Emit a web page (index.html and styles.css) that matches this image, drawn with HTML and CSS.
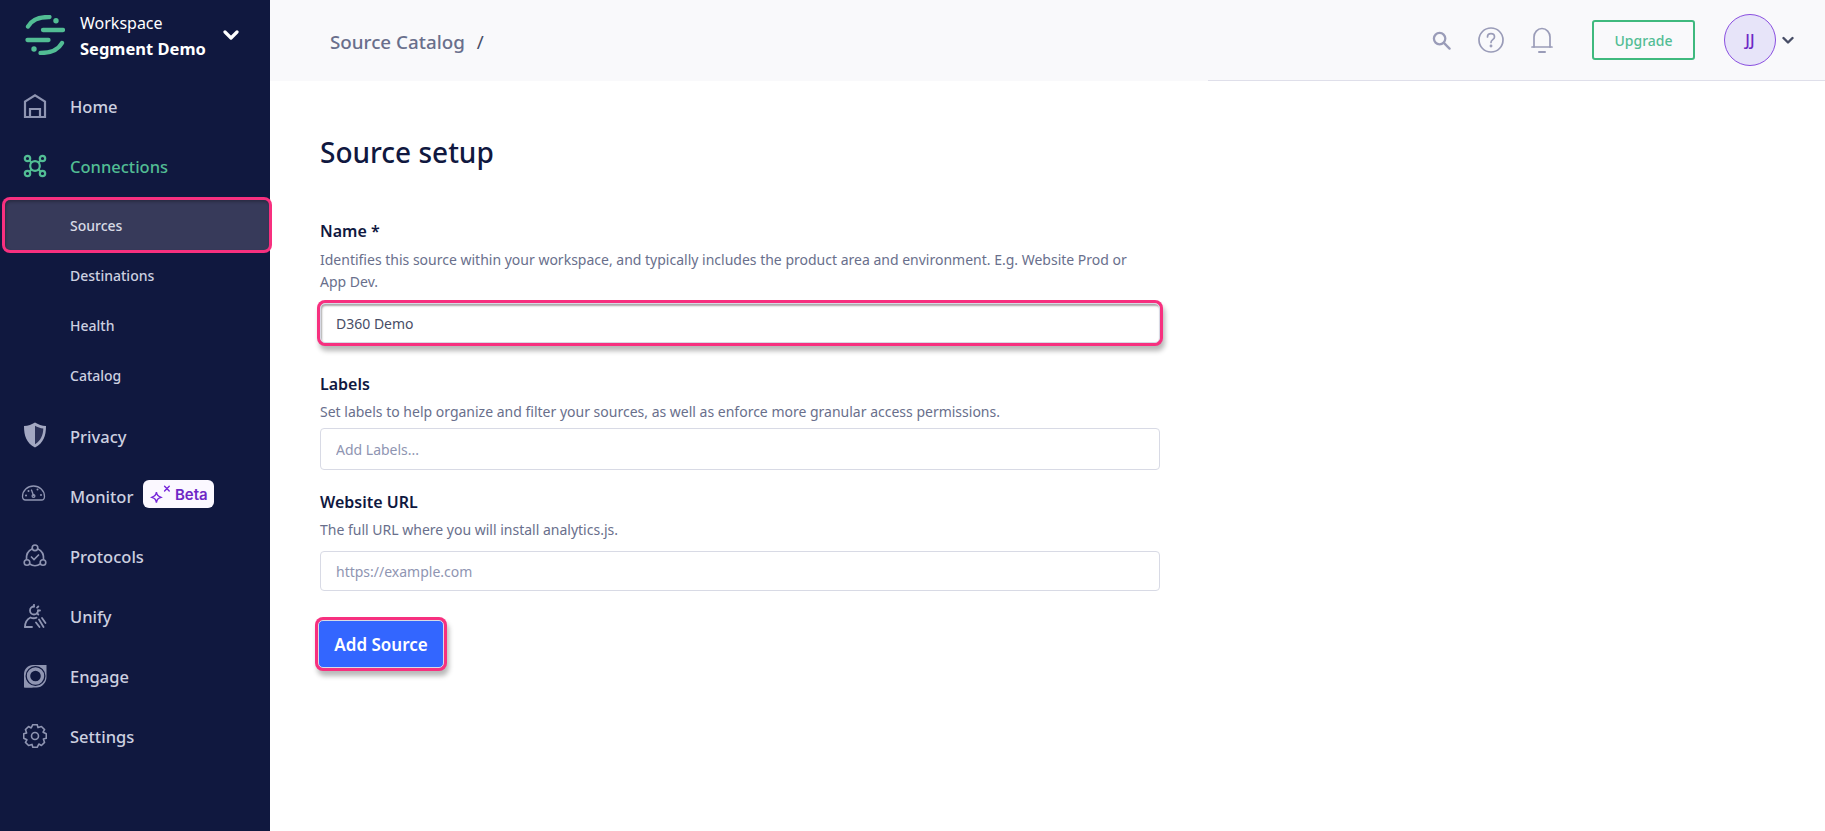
FILE: index.html
```html
<!DOCTYPE html>
<html lang="en">
<head>
<meta charset="utf-8">
<title>Source setup</title>
<link rel="stylesheet" href="styles.css">
</head>
<body>
<div class="app">
  <aside class="sidebar">
    <div class="workspace">
      <svg class="logo" viewBox="0 0 40 40" fill="none" stroke="#52bd94" stroke-width="4.3" stroke-linecap="round">
        <path d="M3 11.500C6.500 5 13 1.800 24.500 2"/>
        <circle cx="31" cy="5.800" r="2.700" fill="#52bd94" stroke="none"/>
        <path d="M18 15H38"/>
        <path d="M2.500 25H23.500"/>
        <circle cx="9" cy="34" r="2.700" fill="#52bd94" stroke="none"/>
        <path d="M37 28C33.500 34.500 27 38 15.500 38"/>
      </svg>
      <div class="workspace-text">
        <div class="workspace-label">Workspace</div>
        <div class="workspace-name">Segment Demo</div>
      </div>
      <svg class="workspace-chevron" viewBox="0 0 16 12" fill="none" stroke="#fff" stroke-width="3.200" stroke-linecap="round" stroke-linejoin="round"><path d="M2 3l6 6 6-6"/></svg>
    </div>
    <nav class="nav">
      <a class="nav-item">
        <svg class="nav-icon" viewBox="0 0 24 24" fill="none" stroke="currentColor" stroke-width="2.200"><path d="M2 23V7.500L12 1.300l10 6.200V23z"/><path d="M7 23V15h10v8"/></svg>
        <span>Home</span>
      </a>
      <a class="nav-item active">
        <svg class="nav-icon" viewBox="0 0 24 24" fill="none" stroke="currentColor" stroke-width="2.200"><circle cx="4.500" cy="4.500" r="2.700"/><circle cx="19.500" cy="4.500" r="2.700"/><circle cx="4.500" cy="19.500" r="2.700"/><circle cx="19.500" cy="19.500" r="2.700"/><circle cx="12" cy="12" r="4.800"/><path d="M6.500 6.500l2.200 2.200M17.500 6.500l-2.200 2.200M6.500 17.500l2.200-2.200M17.500 17.500l-2.200-2.200"/></svg>
        <span>Connections</span>
      </a>
      <a class="sub-item current">Sources</a>
      <a class="sub-item">Destinations</a>
      <a class="sub-item">Health</a>
      <a class="sub-item last">Catalog</a>
      <a class="nav-item">
        <svg class="nav-icon shield" viewBox="0 0 24 26"><path d="M12 .5C9 2.500 5 3.800 1 4c0 10 2.500 17 11 21.500C20.500 21 23 14 23 4c-4-.2-8-1.500-11-3.500z" fill="#a3a8c2"/><path d="M12 3.800v18.500c6.200-3.800 8-9.200 8.300-15.700C17.300 6.200 14.500 5.300 12 3.800z" fill="#2b3157"/></svg>
        <span>Privacy</span>
      </a>
      <a class="nav-item">
        <svg class="nav-icon wide" viewBox="0 0 24 16" fill="none" stroke="currentColor" stroke-width="1.300" stroke-linecap="round"><path d="M4 15C2 15 1 13.500 1 11.500 1 5.500 6 1 12 1s11 4.500 11 10.500c0 2-1 3.500-3 3.500z"/><path d="M12 10.500L10 5"/><circle cx="12" cy="11" r="1.400"/><path d="M4.500 10.500h.01M7 6h.01M16 4.500h.01M19.500 10h.01" stroke-width="2"/></svg>
        <span>Monitor</span>
        <span class="beta">
          <svg class="beta-icon" viewBox="0 0 18 16" fill="none" stroke="#7626d9" stroke-width="1.200" stroke-linecap="round"><path d="M5.500 6c.5 2.500 1 3 4 4.500-3 1-3.500 1.500-4 4.500-.5-3-1-3.500-4-4.500 3-1.500 3.500-2 4-4.500z"/><path d="M12.500 1l4 4M16.500 1l-4 4"/></svg>
          Beta
        </span>
      </a>
      <a class="nav-item">
        <svg class="nav-icon" viewBox="0 0 24 24" fill="none" stroke="currentColor" stroke-width="1.600"><circle cx="12" cy="3.800" r="2.800"/><circle cx="4" cy="18.500" r="2.800"/><circle cx="20" cy="18.500" r="2.800"/><path d="M9.300 4.800C5.500 6.500 3 10.500 3.500 15.700M14.700 4.800C18.500 6.500 21 10.500 20.500 15.700M6.800 20c3 2.200 7.400 2.200 10.400 0"/><path d="M8 12.500l3 3 5-5"/></svg>
        <span>Protocols</span>
      </a>
      <a class="nav-item">
        <svg class="nav-icon" viewBox="0 0 24 24" fill="none" stroke="currentColor" stroke-width="1.800" stroke-linecap="round"><path d="M15 6.500A4 4 0 1 1 11 2.500"/><path d="M11 .8v1.700M15.300 2.500l-1.200 1.200M17 6.500h-2M15.300 10.500l-1.200-1.200"/><path d="M2 23c0-4 1.500-7.500 5.500-9.500 2 1 4 1 6 .2"/><path d="M2 23h7"/><path d="M13 18.500l3.500 4.500M16 15.500l4.500 7.500M19 14l3.500 5"/></svg>
        <span>Unify</span>
      </a>
      <a class="nav-item">
        <svg class="nav-icon" viewBox="0 0 24 24"><path d="M1 23.500V10C1 5 5 1 10 1h13.500v12c0 5.500-4.500 10.500-10 10.500z" fill="currentColor"/><circle cx="12.500" cy="12" r="10" fill="#10183f"/><path d="M1 23.500h9C5 21 2.700 17 2.700 12.500V23z" fill="currentColor"/><circle cx="12.500" cy="12" r="7" fill="none" stroke="currentColor" stroke-width="3.400"/></svg>
        <span>Engage</span>
      </a>
      <a class="nav-item">
        <svg class="nav-icon" viewBox="0 0 24 24" fill="none" stroke="currentColor" stroke-width="1.600" stroke-linejoin="round"><circle cx="12" cy="12" r="3.500"/><path d="M9.800 .7H14.200L15 3.600 18.430 2.450 21.550 5.570 20.060 8.180 23.300 9.800V14.200L20.400 15 21.550 18.430 18.430 21.550 15.820 20.060 14.200 23.300H9.800L9 20.400 5.570 21.550 2.450 18.430 3.940 15.820 .7 14.200V9.800L3.600 9 2.450 5.570 5.570 2.450 8.180 3.940z"/></svg>
        <span>Settings</span>
      </a>
    </nav>
  </aside>
  <div class="main">
    <header class="topbar">
      <div class="crumbs"><span>Source Catalog</span><span class="slash">/</span></div>
      <div class="top-actions">
        <svg class="top-icon search" viewBox="0 0 20 20" fill="none" stroke="#9a9cb8" stroke-width="2.400" stroke-linecap="round"><circle cx="8" cy="8" r="6"/><path d="M12.500 12.500l6 6"/></svg>
        <svg class="top-icon help" viewBox="0 0 26 26" fill="none" stroke="#9a9cb8" stroke-width="1.700" stroke-linecap="round"><circle cx="13" cy="13" r="12"/><path d="M9.500 10c0-2 1.500-3.300 3.500-3.300s3.500 1.300 3.500 3.200c0 2.700-3.500 2.800-3.500 5.500"/><circle cx="13" cy="19" r=".6"/></svg>
        <svg class="top-icon bell" viewBox="0 0 22 26" fill="none" stroke="#9a9cb8" stroke-width="1.700" stroke-linecap="round"><path d="M1 20h20"/><path d="M3 20V10c0-4.500 3.500-8.500 8-8.500s8 4 8 8.500v10"/><path d="M8 25h6" stroke-width="2"/></svg>
        <button class="upgrade">Upgrade</button>
        <div class="avatar">JJ</div>
        <svg class="avatar-chevron" viewBox="0 0 12 9" fill="none" stroke="#474d66" stroke-width="2.400" stroke-linecap="round" stroke-linejoin="round"><path d="M1.500 2l4.500 4.500L10.500 2"/></svg>
      </div>
    </header>
    <main class="content">
      <h1 class="title">Source setup</h1>
      <form class="form">
        <div class="field field-name">
          <label class="label">Name *</label>
          <p class="hint">Identifies this source within your workspace, and typically includes the product area and environment. E.g. Website Prod or App Dev.</p>
          <input class="input marked" value="D360 Demo">
        </div>
        <div class="field field-labels">
          <label class="label">Labels</label>
          <p class="hint">Set labels to help organize and filter your sources, as well as enforce more granular access permissions.</p>
          <input class="input tall" placeholder="Add Labels...">
        </div>
        <div class="field field-url">
          <label class="label">Website URL</label>
          <p class="hint">The full URL where you will install analytics.js.</p>
          <input class="input url" placeholder="https://example.com">
        </div>
        <button class="submit" type="button">Add Source</button>
      </form>
    </main>
  </div>
</div>
</body>
</html>
```
FILE: styles.css
```css
* { box-sizing: border-box; }
html, body { margin: 0; height: 100%; }
body { font-family: "Noto Sans", sans-serif; color: #101840; background: #fff; overflow: hidden; }
.app { display: flex; height: 831px; }

.sidebar { width: 270px; flex: none; background: #10183f; color: #c1c4d6; position: relative; z-index: 1; }
.workspace { height: 70px; margin-bottom: 6px; display: flex; align-items: center; padding-left: 25px; }
.logo { width: 40px; height: 40px; flex: none; }
.workspace-text { margin: 2px 0 0 15px; width: 143px; }
.workspace-label { font-size: 16px; line-height: 24px; color: #fff; }
.workspace-name { font-size: 16.5px; line-height: 24px; margin-top: 2px; font-weight: 700; color: #fff; white-space: nowrap; }
.workspace-chevron { width: 16px; height: 12px; }

.nav { display: flex; flex-direction: column; }
.nav-item { height: 60px; display: flex; align-items: center; padding-left: 23px; font-size: 16.5px; font-weight: 500; color: #cdd0e0; }
.nav-item.active { color: #52bd94; }
.nav-icon { width: 24px; height: 24px; margin-right: 23px; flex: none; color: #8f95b2; }
.active .nav-icon { color: #52bd94; }
.nav-icon.wide { margin-left: -2px; margin-right: 24px; height: 16px; margin-top: -6px; width: 25px; }
.nav-icon.shield { height: 26px; margin-top: -3px; }
.sub-item { height: 50px; display: flex; align-items: center; padding-left: 70px; font-size: 14px; font-weight: 500; color: #cdd0e0; }
.sub-item.last { margin-bottom: 6px; }
.current { margin: 4px 1px 0 5px; padding-left: 65px; background: #373a5a; color: #d8dae5; border-radius: 5px; box-shadow: inset 1px 2px 3px rgba(0,0,0,.25), 0 0 0 3px #f7307f; }

.beta { display: inline-flex; align-items: center; margin: -4px 0 0 9.500px; height: 28px; width: 71px; padding-left: 7px; background: #fbf8ff; border-radius: 6px; color: #6e27c5; font: 600 15px Inter, sans-serif; }
.beta-icon { width: 21px; height: 19px; margin-right: 4px; }

.main { flex: 1; min-width: 0; display: flex; flex-direction: column; }
.topbar { height: 81px; flex: none; background: #f9f9fb; display: flex; align-items: center; justify-content: space-between; padding: 0 31px 1px 60px; position: relative; }
.topbar::after { content: ""; position: absolute; right: 0; bottom: 0; left: 938px; height: 1px; background: #dfdfea; }
.crumbs { display: flex; gap: 12px; margin-top: 4px; font-size: 18.8px; font-weight: 500; color: #696f8c; }
.slash { font-weight: 400; color: #474d66; }
.top-actions { display: flex; align-items: center; }
.top-icon { flex: none; }
.search { width: 19px; height: 19px; margin-right: 27px; }
.help { width: 26px; height: 26px; margin-right: 27px; }
.bell { width: 22px; height: 26px; margin-right: 39px; }
.upgrade { width: 103px; height: 40px; border: 2px solid #3fb97e; border-radius: 3px; background: transparent; color: #52bd94; font: 500 14px "Noto Sans", sans-serif; margin-right: 29px; padding: 0; }
.avatar { width: 52px; height: 52px; border-radius: 50%; background: #e7e4f9; border: 1px solid #8a4fe0; color: #6e27c5; display: flex; align-items: center; justify-content: center; font-size: 16px; font-weight: 500; }
.avatar-chevron { width: 12px; height: 9px; margin-left: 6px; }

.content { padding: 0 0 0 50px; }
.title { margin: 49px 0 0; font-size: 28px; line-height: 44px; font-weight: 500; color: #101840; }
.form { width: 840px; margin-top: 45px; }
.label { display: block; font-size: 16px; font-weight: 600; line-height: 24px; color: #101840; }
.hint { margin: 5px 0 0; max-width: 820px; font-size: 14px; line-height: 22px; color: #696f8c; }
.field-name .hint { margin-top: 6px; }
.input { display: block; width: 100%; height: 40px; margin-top: 5px; padding: 0 15px; border: 1px solid #d8dae5; border-radius: 4px; font: 400 14px "Noto Sans", sans-serif; color: #474d66; background: #fff; outline: none; }
.input.tall { height: 42px; }
.input.url { margin-top: 10px; }
.input::placeholder { color: #8f95b2; opacity: 1; }
.input.marked { box-shadow: inset 1px 2px 2px #aaa, 0 0 0 3px #f7307f, 2px 5px 5px 3px rgba(0,0,0,.28); border-radius: 5px; margin-top: 10px; }
.field-labels { margin-top: 29px; }
.field-url { margin-top: 20px; }
.submit { display: block; width: 126px; height: 48px; margin: 29px 0 0 -2px; background: #3366ff; color: #fff; border: 1px solid #d8dae5; border-radius: 5px; font: 600 17px "Noto Sans", sans-serif; box-shadow: 0 0 0 3px #f7307f, 2px 5px 5px 3px rgba(0,0,0,.28); padding: 0; }
```
